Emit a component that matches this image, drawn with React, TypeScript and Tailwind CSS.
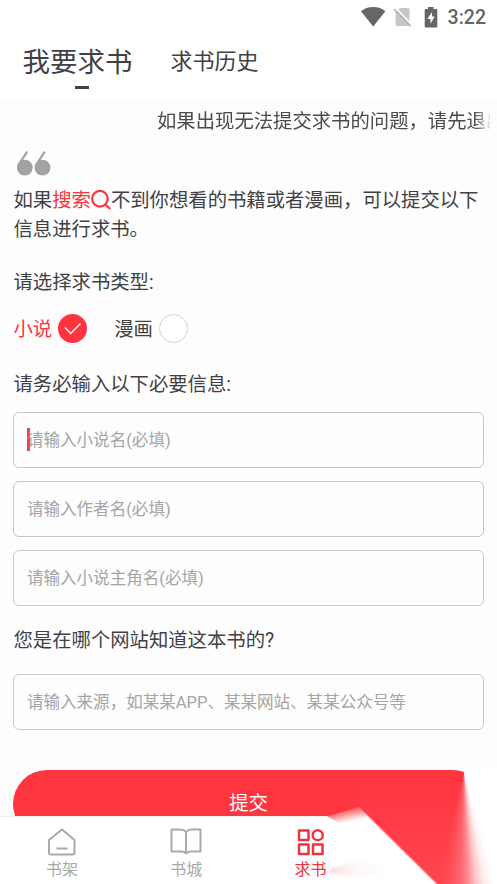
import React from "react";

interface FieldProps {
    placeholder: string;
    focused?: boolean;
}

interface NavItemProps {
    label: string;
    active?: boolean;
    children: React.ReactNode;
}

const StatusBar: React.FC = () => {
    return (<div className="flex h-[34px] shrink-0 items-center justify-end pr-[11px] text-[#666]">
        <svg width="26" height="20" viewBox="0 0 26 20" className="mr-[7px]" fill="currentColor">
            <path d="M1 4.2C4.2 1.6 8.400 0 13.200 0s9 1.600 12.200 4.200L13.200 19.400z"/>
        </svg>
        <svg width="19" height="20" viewBox="0 0 19 20" className="mr-[12px]">
            <path d="M7 1h8a1.500 1.500 0 0 1 1.500 1.500v15a1.500 1.500 0 0 1-1.500 1.500H4a1.500 1.500 0 0 1-1.500-1.500V5.500z" fill="#c8c8c8"/>
            <path d="M2.500 .8L19 18" stroke="#fff" strokeWidth="1.500"/>
            <path d="M.7 2L17.700 19.300" stroke="#b4b4b4" strokeWidth="1.600"/>
        </svg>
        <svg width="14" height="21" viewBox="0 0 14 21" className="mr-[10px]">
            <path d="M4 0h5.500v2H12a1.300 1.300 0 0 1 1.300 1.300v15.900a1.300 1.300 0 0 1-1.300 1.300H2a1.300 1.300 0 0 1-1.300-1.300V3.300A1.300 1.300 0 0 1 2 2h2z" fill="#666"/>
            <path d="M8 5L3.300 12h3.200v4.700L10.700 9.500H8z" fill="#fff"/>
        </svg>
        <span className="pt-px text-[19.500px] font-medium leading-none">3:22</span>
    </div>);
}

const SearchIcon: React.FC = () => {
    return (<svg width="20" height="20" viewBox="0 0 20 20" className="inline-block align-[-3px]" fill="none" stroke="#fb3540" strokeWidth="2.200">
        <circle cx="8.900" cy="8.800" r="7.800"/>
        <path d="M14.500 14.500L19.200 19"/>
    </svg>);
}

const Field: React.FC<FieldProps> = ({placeholder, focused}) => {
    return (<div className="relative flex h-14 items-center rounded-[6px] border border-[#c6c6c8] pl-[13px] pt-[2px] text-[16.550px] text-[#a5a5a5]">
        {focused && <span className="absolute left-[13px] top-[15px] h-[23px] w-[3px] bg-[#ee3f4b]"/>}
        <span className="relative">{placeholder}</span>
    </div>);
}

const NavItem: React.FC<NavItemProps> = ({label, active, children}) => {
    return (<div className={`flex flex-col items-center pt-[10px] ${active ? "text-[#ed3540]" : "text-[#a9a9a9]"}`}>
        <svg width="32" height="30" viewBox="0 0 32 30" fill="none" stroke="currentColor" strokeWidth="2" strokeLinejoin="round">
            {children}
        </svg>
        <span className="mt-px text-[16px] leading-[24px]">{label}</span>
    </div>);
}

// Red smear that spills from the button over the right side of the nav
const Smear: React.FC = () => {
    return (<div className="pointer-events-none absolute bottom-0 right-0">
        <svg width="197" height="115" viewBox="300 769 197 115">
            <defs>
                <linearGradient id="body" x1="0" y1="0" x2="0" y2="1">
                    <stop offset="0" stopColor="#ff353f"/>
                    <stop offset="1" stopColor="#ff444e"/>
                </linearGradient>
                <linearGradient id="wedge" gradientUnits="userSpaceOnUse" x1="350" y1="807" x2="353" y2="821">
                    <stop offset="0" stopColor="#ff3f49"/>
                    <stop offset="0.5" stopColor="#ff9da2"/>
                    <stop offset="1" stopColor="#fff"/>
                </linearGradient>
                <linearGradient id="wisp" x1="0" y1="0" x2="1" y2="0">
                    <stop offset="0" stopColor="#f9a0a5" stopOpacity="0.7"/>
                    <stop offset="0.3" stopColor="#fde0e2" stopOpacity="0.5"/>
                    <stop offset="1" stopColor="#fff4f4" stopOpacity="0"/>
                </linearGradient>
                <filter id="soft" x="-20%" y="-50%" width="140%" height="200%">
                    <feGaussianBlur stdDeviation="2"/>
                </filter>
                <filter id="fine"><feGaussianBlur stdDeviation="0.700"/></filter>
            </defs>
            <path d="M464 772L485 768H497V884H436L360 809z" fill="#fff"/>
            <path d="M327 816.500L360 806.500L380 826H345z" fill="url(#wedge)" filter="url(#fine)"/>
            <path d="M358 770H450Q459 770 464 772V884H437L360 808z" fill="url(#body)"/>
            <path d="M366 814L437 884" stroke="#ff8f95" strokeWidth="1.500" opacity="0.700" filter="url(#fine)"/>
            <path d="M326 871L350 863H392V877H350z" fill="url(#wisp)" filter="url(#soft)"/>
        </svg>
        <div className="absolute bottom-0 right-0 h-[112px] w-[67px] bg-[conic-gradient(from_90deg_at_34px_0px,#fff_0deg,#fff_74deg,#fff0f0_79deg,#ffc4c7_84deg,#ff8b91_88deg,#ff656d_92deg,#ff4c56_98deg,#ff414b00_105deg,#ff414b00_270deg,#fff_270deg)]"/>
    </div>);
}

const App: React.FC = () => {
    return (<div className="relative flex h-[884px] w-[497px] flex-col overflow-hidden bg-[#fdfdfd] font-[Roboto,'Noto_Sans_CJK_SC',sans-serif] text-[19.350px] text-[#414145]">
        <header className="h-[99px] shrink-0 bg-white">
            <StatusBar/>
            <div className="flex items-start pl-[22.500px]">
                <div className="flex flex-col items-center">
                    <span className="h-[52px] text-[27.500px] leading-[57px]">我要求书</span>
                    <span className="ml-[8px] h-[3px] w-[14px] bg-[#414145]"/>
                </div>
                <span className="ml-[38px] text-[22px] leading-[56px]">求书历史</span>
            </div>
        </header>

        <main className="flex min-h-0 flex-1 flex-col overflow-hidden px-[13px]">
            <div className="-mr-[6px] ml-[144px] h-[44px] shrink-0 overflow-hidden whitespace-nowrap leading-[46px] text-[#4b4b4b] [mask-image:linear-gradient(to_right,black_318px,transparent_335px)]">
                如果出现无法提交求书的问题，请先退出
            </div>
            <svg width="34" height="25" viewBox="0 0 34 25" className="ml-[4px] mt-[8px] shrink-0" fill="#a0a2a4">
                <circle cx="7.800" cy="16.600" r="7.900"/>
                <circle cx="25.500" cy="16.600" r="7.900"/>
                <path d="M10.200 .6L1.500 14M27.800 .6L19.100 14" stroke="#a0a2a4" strokeWidth="2.200"/>
            </svg>
            <p className="mt-[10px] pl-[0.500px] leading-[29px]">
                如果<span className="text-[#fb3540]">搜索<SearchIcon/></span>不到你想看的书籍或者漫画，可以提交以下信息进行求书。
            </p>
            <p className="mt-[24px] pl-[0.500px] leading-[29px]">请选择求书类型:</p>
            <div className="mt-[17px] flex h-[29px] shrink-0 items-center pl-[0.500px]">
                <span className="pt-px text-[#fb3540]">小说</span>
                <svg width="29" height="29" viewBox="0 0 29 29" className="ml-[6px]">
                    <circle cx="14.500" cy="14.500" r="14.500" fill="#ff343f"/>
                    <path d="M7 13.500L12.700 19.500L22.500 9.500" fill="none" stroke="#fff" strokeWidth="1.300"/>
                </svg>
                <span className="ml-[27px] pt-px">漫画</span>
                <span className="ml-[6px] size-[29px] rounded-full border border-[#d2d2d2] bg-white"/>
            </div>
            <p className="mt-[27px] pl-[0.500px] leading-[29px]">请务必输入以下必要信息:</p>
            <div className="mt-[13px] flex shrink-0 flex-col gap-[13px]">
                <Field placeholder="请输入小说名(必填)" focused/>
                <Field placeholder="请输入作者名(必填)"/>
                <Field placeholder="请输入小说主角名(必填)"/>
            </div>
            <p className="mt-[20px] pl-[0.500px] leading-[29px]">您是在哪个网站知道这本书的?</p>
            <div className="mt-[19px] shrink-0">
                <Field placeholder="请输入来源，如某某APP、某某网站、某某公众号等"/>
            </div>
            <button className="mt-[40px] h-[68px] w-[471px] shrink-0 rounded-[34px] bg-[#ff353f] text-white">提交</button>
        </main>

        <nav className="grid h-[68px] shrink-0 grid-cols-4 border-t border-[#f0f0f0] bg-white">
            <NavItem label="书架">
                <path d="M16 2.500L28.500 13V25.500a2 2 0 0 1-2 2H5a2 2 0 0 1-2-2V13zM10.500 21.500H21.500"/>
            </NavItem>
            <NavItem label="书城">
                <path d="M16 5Q14 2.500 10.500 2.500H1.500V24.500H11Q14.500 24.500 16 26.500Q17.500 24.500 21 24.500H30.500V2.500H21.500Q18 2.500 16 5zV26.500"/>
            </NavItem>
            <NavItem label="求书" active>
                <path d="M4 3.500h9.500v9.500H4zM4 17.500h9.500v9.500H4zM18 17.500h9.500v9.500H18z" strokeWidth="2.500"/>
                <circle cx="22.700" cy="8.200" r="5" strokeWidth="2.500"/>
            </NavItem>
        </nav>
        <Smear/>
    </div>);
}

export default App;
